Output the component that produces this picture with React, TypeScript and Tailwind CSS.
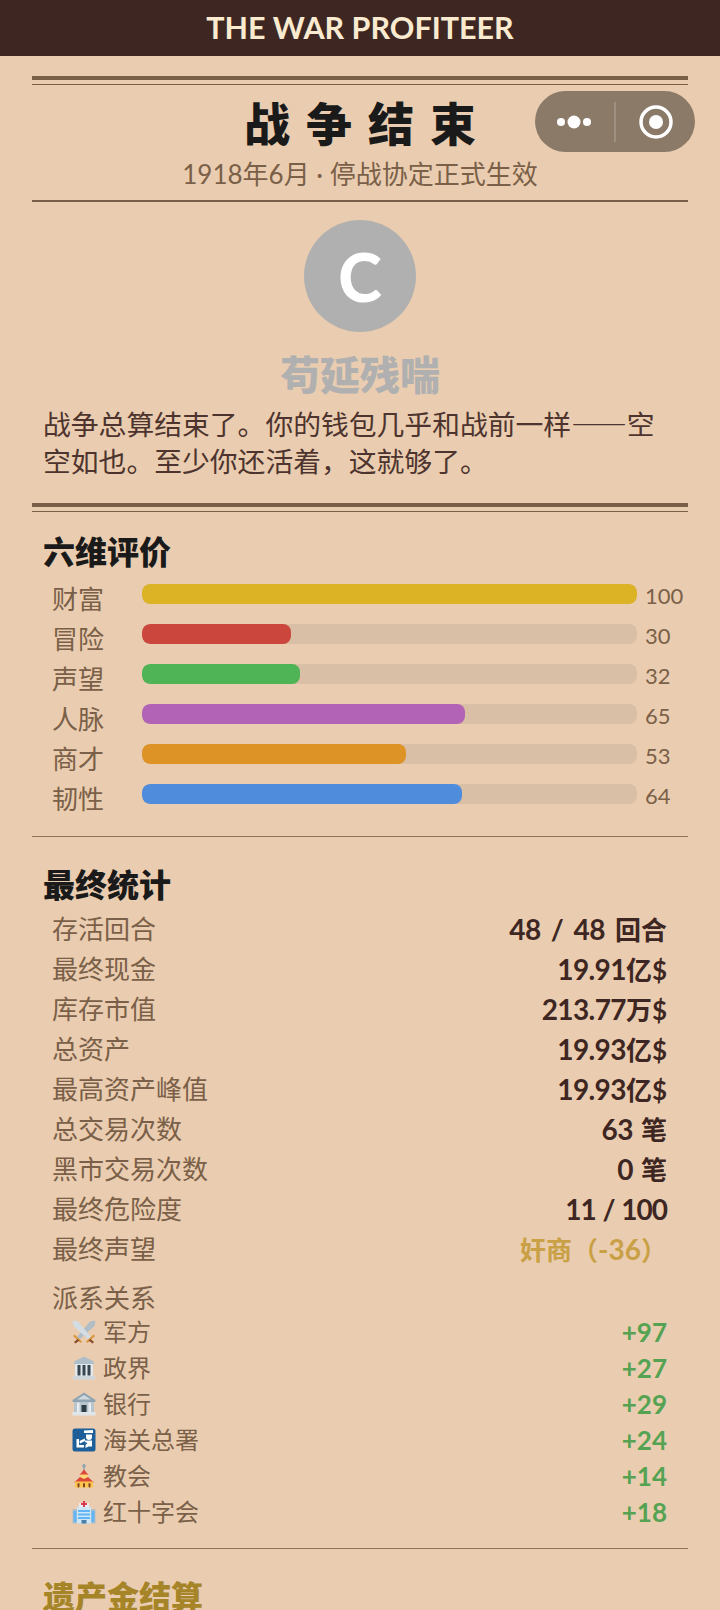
const bars = [
  { label: "财富", value: 100, color: "bg-[#dcb325]", width: "w-full" },
  { label: "冒险", value: 30, color: "bg-[#cb463c]", width: "w-[30%]" },
  { label: "声望", value: 32, color: "bg-[#4fb455]", width: "w-[32%]" },
  { label: "人脉", value: 65, color: "bg-[#b263b5]", width: "w-[65.3%]" },
  { label: "商才", value: 53, color: "bg-[#dd9326]", width: "w-[53.4%]" },
  { label: "韧性", value: 64, color: "bg-[#4f8cdc]", width: "w-[64.7%]" },
];

const stats = [
  { label: "存活回合", value: "48 / 48 ", unit: "回合", spacing: "tracking-[-0.6px] [word-spacing:4px]" },
  { label: "最终现金", value: "19.91", unit: "亿$", spacing: "tracking-[-0.6px]" },
  { label: "库存市值", value: "213.77", unit: "万$", spacing: "tracking-[-0.6px]" },
  { label: "总资产", value: "19.93", unit: "亿$", spacing: "tracking-[-0.6px]" },
  { label: "最高资产峰值", value: "19.93", unit: "亿$", spacing: "tracking-[-0.6px]" },
  { label: "总交易次数", value: "63 ", unit: "笔", spacing: "tracking-[-0.6px] [word-spacing:2px]" },
  { label: "黑市交易次数", value: "0 ", unit: "笔", spacing: "tracking-[-0.6px] [word-spacing:2px]" },
  { label: "最终危险度", value: "11 / 100", unit: "", spacing: "tracking-[-1px] [word-spacing:1px]" },
];

function Swords() {
  return (
    <svg viewBox="0 0 24 24" className="h-6 w-6 shrink-0">
      <path d="M23.5 0.5l-1 5.5L7.5 19.5l-2.5-2.5L18 1.5z" fill="#aebdc6" />
      <path d="M0.5 0.5l1 5.5 15 13.5 2.5-2.5L6 1.5z" fill="#d3dde3" />
      <path d="M2.5 14.5l7.5 7-1.5 1.5-7.5-7z" fill="#d9963a" />
      <path d="M21.5 14.5l-7.5 7 1.5 1.5 7.5-7z" fill="#d9963a" />
      <path d="M5.5 19l-3.5 3 1.5 1.5L7.5 20.5z" fill="#8a4b2a" />
      <path d="M18.5 19l3.5 3-1.5 1.5-4-3z" fill="#8a4b2a" />
    </svg>
  );
}

function Columns() {
  return (
    <svg viewBox="0 0 24 24" className="h-6 w-6 shrink-0">
      <path d="M12 0.5L2 5.5v2.5h20V5.5z" fill="#aebfc9" />
      <rect x="3" y="8" width="18" height="12" fill="#e3e9ec" />
      <rect x="5.5" y="9" width="3" height="10.5" fill="#37474f" />
      <rect x="10.5" y="9" width="3" height="10.5" fill="#37474f" />
      <rect x="15.5" y="9" width="3" height="10.5" fill="#37474f" />
      <rect x="1" y="20" width="22" height="3.5" fill="#cdd7dd" />
    </svg>
  );
}

function Bank() {
  return (
    <svg viewBox="0 0 24 24" className="h-6 w-6 shrink-0">
      <path d="M12 0.5L0.5 8v2h23V8z" fill="#8fa3b0" />
      <path d="M12 3L5 7.5h14z" fill="#cfd8dc" />
      <rect x="2" y="10" width="20" height="10" fill="#b7c5cd" />
      <rect x="5" y="10.5" width="2.5" height="9.5" fill="#e8edf0" />
      <rect x="16.5" y="10.5" width="2.5" height="9.5" fill="#e8edf0" />
      <rect x="9.5" y="13" width="5" height="7" fill="#2f3d45" />
      <rect x="0.5" y="20" width="23" height="3.5" fill="#dfe5e8" />
    </svg>
  );
}

function Customs() {
  return (
    <svg viewBox="0 0 24 24" className="h-6 w-6 shrink-0">
      <rect x="0.5" y="0.5" width="23" height="23" rx="2.5" fill="#1f5f99" />
      <path d="M12 2.5l9-0.5v3h-9z" fill="#fff" />
      <path d="M14 6.5h6v2.5a3 3 0 01-6 0z" fill="#fff" />
      <path d="M13 12.5h7v6h-3.5l-3 1.5v-3l2-2-2.5-1z" fill="#fff" />
      <path d="M4.5 11h2.5v6h5v2.5H4.5z" fill="#fff" />
      <path d="M7.5 13l5.5-2.500v2.500l-5 2.500z" fill="#fff" />
    </svg>
  );
}

function Church() {
  return (
    <svg viewBox="0 0 24 24" className="h-6 w-6 shrink-0">
      <rect x="11.3" y="0" width="1.4" height="7" fill="#90a4ae" />
      <circle cx="12" cy="2" r="1.8" fill="#90a4ae" />
      <path d="M12 5.5l4.5 5.5h-9z" fill="#d9483b" />
      <rect x="8.5" y="10.5" width="7" height="5" fill="#ffd774" />
      <path d="M8 13L2 18.5h20L16 13l-4 2z" fill="#d9483b" />
      <rect x="3" y="17.5" width="18" height="6" fill="#ffc44d" />
      <rect x="5.5" y="19" width="2" height="4.5" rx="1" fill="#7a4a20" />
      <rect x="11" y="19" width="2" height="4.5" rx="1" fill="#7a4a20" />
      <rect x="16.5" y="19" width="2" height="4.5" rx="1" fill="#7a4a20" />
    </svg>
  );
}

function Hospital() {
  return (
    <svg viewBox="0 0 24 24" className="h-6 w-6 shrink-0">
      <rect x="7" y="3" width="10" height="6" fill="#e8edf0" />
      <path d="M11 1h2v2h2v2h-2v2h-2V5H9V3h2z" fill="#d83a52" />
      <rect x="0.5" y="9" width="23" height="14.5" fill="#b0bec5" />
      <rect x="5" y="7" width="14" height="16.5" fill="#cfe6f7" />
      <rect x="1.5" y="11" width="3" height="11" fill="#64b5f6" />
      <rect x="19.5" y="11" width="3" height="11" fill="#64b5f6" />
      <rect x="6" y="10" width="12" height="2" fill="#64b5f6" />
      <rect x="6" y="13.5" width="12" height="2" fill="#64b5f6" />
      <rect x="6" y="17" width="12" height="2" fill="#64b5f6" />
      <rect x="9.5" y="20" width="5" height="3.5" fill="#4a7fa8" />
    </svg>
  );
}

const factions = [
  { name: "军方", value: "+97", Icon: Swords },
  { name: "政界", value: "+27", Icon: Columns },
  { name: "银行", value: "+29", Icon: Bank },
  { name: "海关总署", value: "+24", Icon: Customs },
  { name: "教会", value: "+14", Icon: Church },
  { name: "红十字会", value: "+18", Icon: Hospital },
];

function DoubleRule() {
  return (
    <div>
      <div className="h-1 bg-[#7a5f48]" />
      <div className="mt-1 h-px bg-[#7a5f48]" />
    </div>
  );
}

export default function App() {
  return (
    <div lang="zh-CN" className="relative h-[1610px] overflow-hidden bg-[#eacdb0] font-['Lato','Noto_Sans_CJK_SC',sans-serif]">
      <header className="flex h-14 items-center justify-center bg-[#3e2723]">
        <h1 className="text-[30.5px] font-bold text-[#faebd0]">THE WAR PROFITEER</h1>
      </header>

      {/* WeChat capsule sits over the page */}
      <div className="absolute left-[535px] top-[91px] h-[61px] w-[160px] rounded-full bg-[#8c7a68]">
        <svg viewBox="0 0 160 61" className="h-full w-full">
          <circle cx="26" cy="31" r="4" fill="#fff" />
          <circle cx="39" cy="31" r="6.5" fill="#fff" />
          <circle cx="52" cy="31" r="4" fill="#fff" />
          <rect x="79.5" y="11" width="1" height="40" fill="#ffffff" opacity="0.35" />
          <circle cx="121" cy="31" r="15" fill="none" stroke="#fff" strokeWidth="3.5" />
          <circle cx="121" cy="31" r="7" fill="#fff" />
        </svg>
      </div>

      <main className="px-8 pt-5">
        <DoubleRule />
        <div className="border-b-2 border-[#7a5f48] pb-2 pt-[9px] text-center">
          <h2 className="pl-4 text-[46px] leading-[60px] font-black tracking-[16px] text-[#1a1a1a]">战争结束</h2>
          <p className="mt-[2px] text-[26px] leading-9 text-[#7a6048]">1918年6月 · 停战协定正式生效</p>
        </div>

        <div className="mx-auto mt-[18px] flex h-28 w-28 items-center justify-center rounded-full bg-[#b0b0b0] text-[66px] font-black text-white">
          C
        </div>
        <p className="mt-[19px] text-center text-[40px] leading-[48px] font-black text-[#b0b0b0]">苟延残喘</p>
        <p className="mt-[6px] pl-[11px] pr-3 font-['Noto_Sans_CJK_SC',sans-serif] text-[27.8px] leading-[37px] text-[#4e342e]">
          战争总算结束了。你的钱包几乎和战前一样——空空如也。至少你还活着，这就够了。
        </p>

        <div className="mt-6">
          <DoubleRule />
        </div>

        <h3 className="mt-[18px] pl-[11px] text-[32px] leading-[44px] font-black text-[#1a1a1a]">六维评价</h3>
        <div className="pl-5">
          {bars.map((bar) => (
            <div key={bar.label} className="flex h-10">
              <span className="w-[90px] shrink-0 text-[26px] leading-[50px] text-[#7a6048]">{bar.label}</span>
              <div className="mt-[10px] h-5 w-[495px] shrink-0 overflow-hidden rounded-lg bg-[#d8bfa5]">
                <div className={`h-full rounded-lg ${bar.color} ${bar.width}`} />
              </div>
              <span className="ml-2 text-[22px] leading-[44px] text-[#7a6048]">{bar.value}</span>
            </div>
          ))}
        </div>

        <div className="mt-[22px] h-px bg-[#8f735c]" />

        <h3 className="mt-[26px] pl-[11px] text-[32px] leading-[44px] font-black text-[#1a1a1a]">最终统计</h3>
        <div className="mt-[2px] pl-5 pr-[21px]">
          {stats.map((stat) => (
            <div key={stat.label} className="flex h-10 items-center justify-between">
              <span className="text-[26px] text-[#7a6048]">{stat.label}</span>
              <span className={`whitespace-pre text-[28px] font-bold text-[#3e2723] ${stat.spacing}`}>
                {stat.value}
                <span className="text-[26px] tracking-normal">{stat.unit}</span>
              </span>
            </div>
          ))}
          <div className="flex h-10 items-center justify-between">
            <span className="text-[26px] text-[#7a6048]">最终声望</span>
            <span className="text-[26px] font-bold text-[#c9a045]">
              奸商（<span className="text-[28px]">-36</span>）
            </span>
          </div>

          <p className="mt-[11px] text-[26px] leading-9 text-[#7a6048]">派系关系</p>
          <div className="-mt-[2px]">
            {factions.map(({ name, value, Icon }) => (
              <div key={name} className="flex h-9 items-center justify-between pl-5">
                <span className="flex items-center gap-[7px] text-[24px] text-[#7a6048]">
                  <Icon />
                  {name}
                </span>
                <span className="text-[26px] font-bold text-[#55a352]">{value}</span>
              </div>
            ))}
          </div>
        </div>

        <div className="mt-[18px] h-px bg-[#8f735c]" />

        <h3 className="mt-[26px] pl-[11px] text-[32px] leading-[44px] font-black text-[#a68428]">遗产金结算</h3>
      </main>
    </div>
  );
}
